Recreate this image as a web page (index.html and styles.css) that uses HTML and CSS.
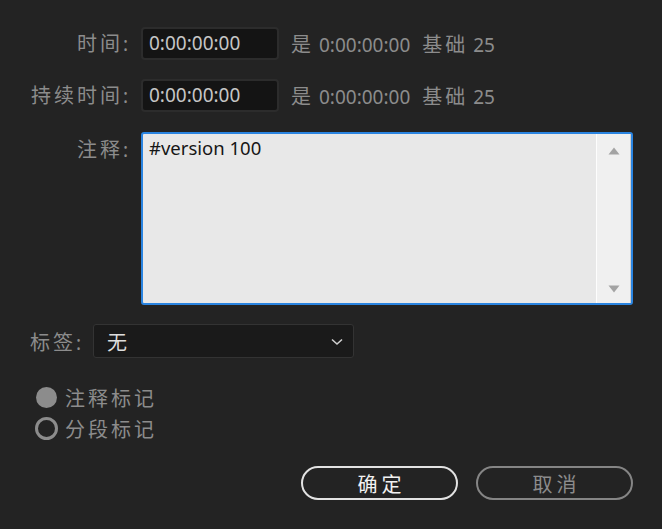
FILE: index.html
```html
<!DOCTYPE html>
<html lang="zh">
<head>
<meta charset="utf-8">
<link rel="stylesheet" href="styles.css">
</head>
<body>
<div class="dlg">
  <div class="row r1">
    <div class="lbl"><span class="cj">时间</span>:</div>
    <div class="tc">0:00:00:00</div>
    <div class="info"><span class="cj">是</span> 0:00:00:00<span class="cj base">基础</span> 25</div>
  </div>
  <div class="row r2">
    <div class="lbl"><span class="cj">持续时间</span>:</div>
    <div class="tc">0:00:00:00</div>
    <div class="info"><span class="cj">是</span> 0:00:00:00<span class="cj base">基础</span> 25</div>
  </div>
  <div class="row r3">
    <div class="lbl lbl-top"><span class="cj">注释</span>:</div>
    <div class="ta">
      <div class="ta-text">#version 100</div>
      <div class="sb">
        <svg class="arr" width="12" height="8" viewBox="0 0 12 8"><path d="M6 0.5 L11.5 7.5 L0.5 7.5 Z" fill="#a3a3a3"/></svg>
        <svg class="arr" width="12" height="8" viewBox="0 0 12 8"><path d="M0.5 0.5 L11.5 0.5 L6 7.5 Z" fill="#a3a3a3"/></svg>
      </div>
    </div>
  </div>
  <div class="tagrow">
    <div class="lbl2"><span class="cj">标签</span>:</div>
    <div class="dd">
      <span class="cj dd-val">无</span>
      <svg class="chev" width="12" height="8" viewBox="0 0 12 8"><path d="M1 1.5 L6 6 L11 1.5" fill="none" stroke="#cfcfcf" stroke-width="1.6"/></svg>
    </div>
  </div>
  <div class="radios">
    <div class="radio"><span class="dot filled"></span><span class="cj">注释标记</span></div>
    <div class="radio"><span class="dot ring"></span><span class="cj">分段标记</span></div>
  </div>
  <div class="btns">
    <div class="btn ok"><span class="cj">确定</span></div>
    <div class="btn cancel"><span class="cj">取消</span></div>
  </div>
</div>
</body>
</html>
```

FILE: styles.css
```css
html, body {
  margin: 0;
  padding: 0;
  background: #232323;
  width: 662px;
  height: 529px;
  overflow: hidden;
}
body {
  font-family: "Noto Sans", "Noto Sans CJK SC", sans-serif;
  font-size: 19px;
  color: #8c8c8c;
}
.cj {
  font-family: "Noto Sans CJK SC", sans-serif;
  font-size: 20px;
  letter-spacing: 3px;
}
.dlg {
  padding-top: 27px;
}
.row {
  display: flex;
  align-items: center;
  height: 33px;
}
.r2 { margin-top: 19px; }
.r3 { margin-top: 20px; height: 173px; align-items: flex-start; }
.lbl {
  width: 128px;
  margin-right: 13px;
  text-align: right;
  white-space: nowrap;
  line-height: 33px;
}
.tc {
  box-sizing: border-box;
  width: 138px;
  height: 33px;
  background: #141414;
  border: 2px solid #2c2c2c;
  border-radius: 4px;
  color: #c6c6c6;
  padding-left: 6px;
  line-height: 29px;
}
.info {
  margin-left: 12px;
  white-space: nowrap;
}
.base { margin-left: 12px; }
.ta {
  box-sizing: border-box;
  width: 492px;
  height: 173px;
  border: 2px solid #2a84e0;
  border-radius: 3px;
  background: #e8e8e8;
  display: flex;
}
.ta-text {
  flex: 1;
  color: #161616;
  font-size: 18.5px;
  padding: 2px 0 0 6px;
  line-height: 24px;
}
.sb {
  width: 33px;
  background: #f0f0f0;
  border-left: 1px solid #fdfdfd;
  border-right: 1px solid #cfcfcf;
  display: flex;
  flex-direction: column;
  justify-content: space-between;
  align-items: center;
  padding: 13px 0 10px;
}
.arr { display: block; }
.tagrow {
  display: flex;
  align-items: center;
  margin-top: 19px;
  padding-left: 30px;
  height: 34px;
}
.lbl2 {
  width: 51px;
  margin-right: 12px;
  white-space: nowrap;
}
.dd {
  box-sizing: border-box;
  width: 261px;
  height: 34px;
  background: #1a1a1a;
  border: 1px solid #333333;
  border-radius: 3px;
  display: flex;
  align-items: center;
  justify-content: space-between;
  padding: 0 10px 0 13px;
}
.dd-val { color: #dedede; }
.chev { display: block; margin-top: 1px; }
.radios {
  margin-top: 24px;
  padding-left: 35px;
  display: flex;
  flex-direction: column;
  gap: 1px;
}
.radio {
  display: flex;
  align-items: center;
  height: 30px;
}
.dot {
  box-sizing: border-box;
  border-radius: 50%;
}
.filled {
  background: #8c8c8c;
  width: 21px;
  height: 21px;
  margin-left: 1px;
  margin-right: 8px;
}
.ring {
  width: 23px;
  height: 23px;
  border: 3px solid #8c8c8c;
  margin-right: 7px;
}
.btns {
  margin-top: 23px;
  display: flex;
  justify-content: flex-end;
  gap: 18px;
  padding-right: 29px;
}
.btn {
  box-sizing: border-box;
  width: 157px;
  height: 34px;
  border-radius: 17px;
  display: flex;
  align-items: center;
  justify-content: center;
}
.btn .cj { letter-spacing: 4px; margin-right: -4px; }
.ok {
  border: 2px solid #e2e2e2;
  color: #f2f2f2;
}
.cancel {
  border: 2px solid #858585;
  color: #8c8c8c;
}
```
